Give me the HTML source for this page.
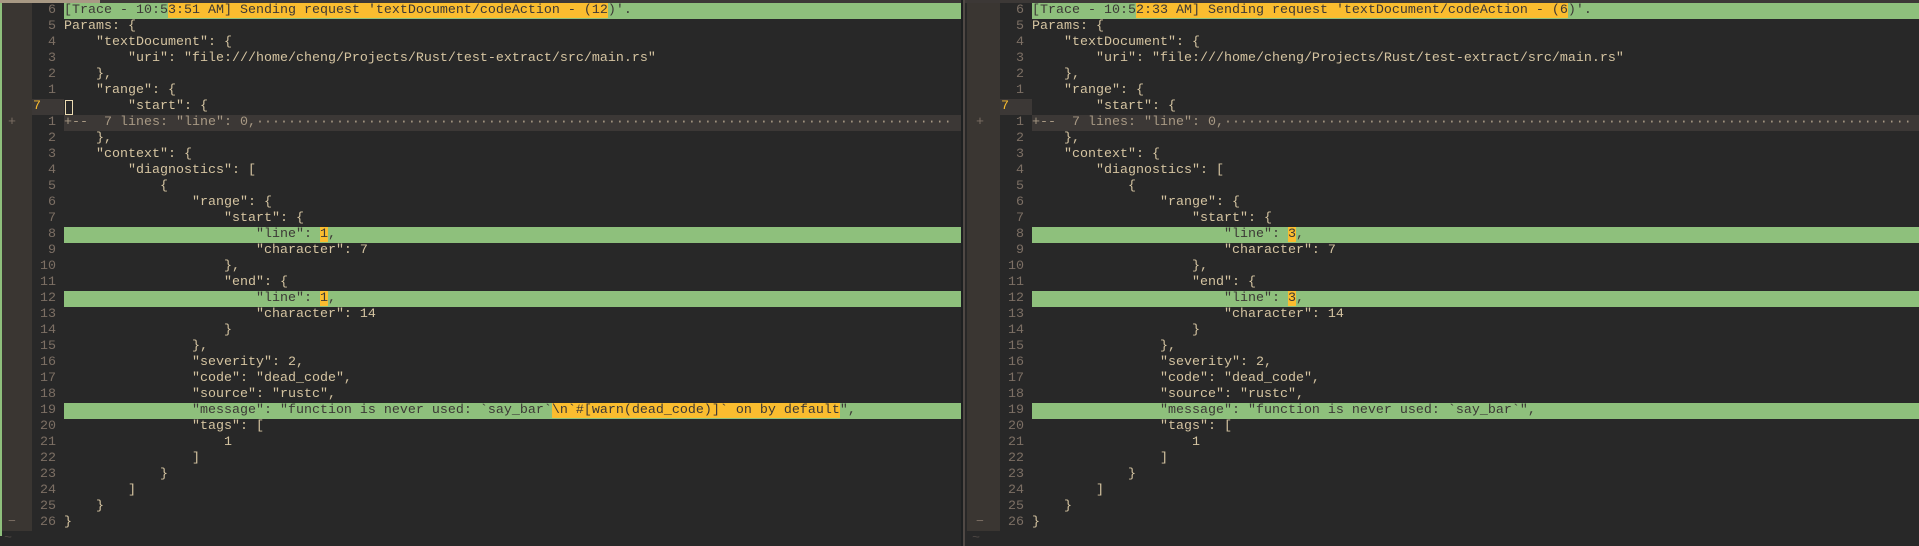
<!DOCTYPE html>
<html><head><meta charset="utf-8"><style>
html,body{margin:0;padding:0;background:#282828;width:1919px;height:546px;overflow:hidden;}
body{position:relative;font-family:"Liberation Mono",monospace;font-size:13.33px;color:#d5c4a1;}
.pane{position:absolute;top:0;height:546px;}
.sign{position:absolute;top:3px;height:528px;background:#3a3632;}
.r{position:absolute;left:0;right:0;height:16px;line-height:16px;white-space:pre;}
.n{position:absolute;left:32px;width:24px;text-align:right;color:#7c6f64;}
.t{position:absolute;left:64px;right:0;height:16px;white-space:pre;}
.g{background:#8ec07c;color:#3c3836;}
.y{background:#fabd2f;color:#3c3836;}
.fold{background:#3c3836;color:#a89984;}
.sg{position:absolute;left:8px;color:#7c6f64;}
.cur{background:#3c3836;}
.tl{position:absolute;color:#504945;}
</style></head><body>
<div style="position:absolute;left:0;top:0;width:1919px;height:3px;background:#3c3836"></div>
<div style="position:absolute;left:0;top:0;width:100px;height:3px;background:#a89984"></div>
<div style="position:absolute;left:0;top:3px;width:2px;height:533px;background:#8ec07c"></div>
<div style="position:absolute;left:963px;top:0;width:2px;height:546px;background:#504945"></div>
<div style="position:absolute;left:961px;top:0;width:2px;height:546px;background:#1d2021"></div>

<div class="pane" style="left:0;width:961px;">
<div class="sign" style="left:2px;width:30px"></div>
<div class="r" style="top:3px"><span class="n">6</span><span class="t g">[Trace - 10:5<span class="y">3:51 AM] Sending request 'textDocument/codeAction - (12</span>)'.</span></div>
<div class="r" style="top:19px"><span class="n">5</span><span class="t">Params: {</span></div>
<div class="r" style="top:35px"><span class="n">4</span><span class="t">    "textDocument": {</span></div>
<div class="r" style="top:51px"><span class="n">3</span><span class="t">        "uri": "file:///home/cheng/Projects/Rust/test-extract/src/main.rs"</span></div>
<div class="r" style="top:67px"><span class="n">2</span><span class="t">    },</span></div>
<div class="r" style="top:83px"><span class="n">1</span><span class="t">    "range": {</span></div>
<div class="r" style="top:99px"><span class="cur" style="position:absolute;left:32px;width:32px;height:16px"></span><span style="position:absolute;left:33px;color:#fabd2f">7</span><span style="position:absolute;left:65px;top:1px;width:6px;height:13px;border:1px solid #ebdbb2"></span><span class="t">        "start": {</span></div>
<div class="r" style="top:115px"><span class="sg">+</span><span class="n">1</span><span class="t fold">+--  7 lines: "line": 0,·······················································································</span></div>
<div class="r" style="top:131px"><span class="n">2</span><span class="t">    },</span></div>
<div class="r" style="top:147px"><span class="n">3</span><span class="t">    "context": {</span></div>
<div class="r" style="top:163px"><span class="n">4</span><span class="t">        "diagnostics": [</span></div>
<div class="r" style="top:179px"><span class="n">5</span><span class="t">            {</span></div>
<div class="r" style="top:195px"><span class="n">6</span><span class="t">                "range": {</span></div>
<div class="r" style="top:211px"><span class="n">7</span><span class="t">                    "start": {</span></div>
<div class="r" style="top:227px"><span class="n">8</span><span class="t g">                        "line": <span class="y">1</span>,</span></div>
<div class="r" style="top:243px"><span class="n">9</span><span class="t">                        "character": 7</span></div>
<div class="r" style="top:259px"><span class="n">10</span><span class="t">                    },</span></div>
<div class="r" style="top:275px"><span class="n">11</span><span class="t">                    "end": {</span></div>
<div class="r" style="top:291px"><span class="n">12</span><span class="t g">                        "line": <span class="y">1</span>,</span></div>
<div class="r" style="top:307px"><span class="n">13</span><span class="t">                        "character": 14</span></div>
<div class="r" style="top:323px"><span class="n">14</span><span class="t">                    }</span></div>
<div class="r" style="top:339px"><span class="n">15</span><span class="t">                },</span></div>
<div class="r" style="top:355px"><span class="n">16</span><span class="t">                "severity": 2,</span></div>
<div class="r" style="top:371px"><span class="n">17</span><span class="t">                "code": "dead_code",</span></div>
<div class="r" style="top:387px"><span class="n">18</span><span class="t">                "source": "rustc",</span></div>
<div class="r" style="top:403px"><span class="n">19</span><span class="t g">                "message": "function is never used: `say_bar`<span class="y">\n`#[warn(dead_code)]` on by default</span>",</span></div>
<div class="r" style="top:419px"><span class="n">20</span><span class="t">                "tags": [</span></div>
<div class="r" style="top:435px"><span class="n">21</span><span class="t">                    1</span></div>
<div class="r" style="top:451px"><span class="n">22</span><span class="t">                ]</span></div>
<div class="r" style="top:467px"><span class="n">23</span><span class="t">            }</span></div>
<div class="r" style="top:483px"><span class="n">24</span><span class="t">        ]</span></div>
<div class="r" style="top:499px"><span class="n">25</span><span class="t">    }</span></div>
<div class="r" style="top:515px"><span class="sg">−</span><span class="n">26</span><span class="t">}</span></div>
<div class="r" style="top:531px"><span class="tl" style="left:4px">~</span></div>
</div>

<div class="pane" style="left:968px;width:951px;">
<div class="sign" style="left:-1px;width:33px"></div>
<div class="r" style="top:3px"><span class="n">6</span><span class="t g">[Trace - 10:5<span class="y">2:33 AM] Sending request 'textDocument/codeAction - (6</span>)'.</span></div>
<div class="r" style="top:19px"><span class="n">5</span><span class="t">Params: {</span></div>
<div class="r" style="top:35px"><span class="n">4</span><span class="t">    "textDocument": {</span></div>
<div class="r" style="top:51px"><span class="n">3</span><span class="t">        "uri": "file:///home/cheng/Projects/Rust/test-extract/src/main.rs"</span></div>
<div class="r" style="top:67px"><span class="n">2</span><span class="t">    },</span></div>
<div class="r" style="top:83px"><span class="n">1</span><span class="t">    "range": {</span></div>
<div class="r" style="top:99px"><span class="cur" style="position:absolute;left:32px;width:32px;height:16px"></span><span style="position:absolute;left:33px;color:#fabd2f">7</span><span class="t">        "start": {</span></div>
<div class="r" style="top:115px"><span class="sg">+</span><span class="n">1</span><span class="t fold">+--  7 lines: "line": 0,······················································································</span></div>
<div class="r" style="top:131px"><span class="n">2</span><span class="t">    },</span></div>
<div class="r" style="top:147px"><span class="n">3</span><span class="t">    "context": {</span></div>
<div class="r" style="top:163px"><span class="n">4</span><span class="t">        "diagnostics": [</span></div>
<div class="r" style="top:179px"><span class="n">5</span><span class="t">            {</span></div>
<div class="r" style="top:195px"><span class="n">6</span><span class="t">                "range": {</span></div>
<div class="r" style="top:211px"><span class="n">7</span><span class="t">                    "start": {</span></div>
<div class="r" style="top:227px"><span class="n">8</span><span class="t g">                        "line": <span class="y">3</span>,</span></div>
<div class="r" style="top:243px"><span class="n">9</span><span class="t">                        "character": 7</span></div>
<div class="r" style="top:259px"><span class="n">10</span><span class="t">                    },</span></div>
<div class="r" style="top:275px"><span class="n">11</span><span class="t">                    "end": {</span></div>
<div class="r" style="top:291px"><span class="n">12</span><span class="t g">                        "line": <span class="y">3</span>,</span></div>
<div class="r" style="top:307px"><span class="n">13</span><span class="t">                        "character": 14</span></div>
<div class="r" style="top:323px"><span class="n">14</span><span class="t">                    }</span></div>
<div class="r" style="top:339px"><span class="n">15</span><span class="t">                },</span></div>
<div class="r" style="top:355px"><span class="n">16</span><span class="t">                "severity": 2,</span></div>
<div class="r" style="top:371px"><span class="n">17</span><span class="t">                "code": "dead_code",</span></div>
<div class="r" style="top:387px"><span class="n">18</span><span class="t">                "source": "rustc",</span></div>
<div class="r" style="top:403px"><span class="n">19</span><span class="t g">                "message": "function is never used: `say_bar`",</span></div>
<div class="r" style="top:419px"><span class="n">20</span><span class="t">                "tags": [</span></div>
<div class="r" style="top:435px"><span class="n">21</span><span class="t">                    1</span></div>
<div class="r" style="top:451px"><span class="n">22</span><span class="t">                ]</span></div>
<div class="r" style="top:467px"><span class="n">23</span><span class="t">            }</span></div>
<div class="r" style="top:483px"><span class="n">24</span><span class="t">        ]</span></div>
<div class="r" style="top:499px"><span class="n">25</span><span class="t">    }</span></div>
<div class="r" style="top:515px"><span class="sg">−</span><span class="n">26</span><span class="t">}</span></div>
<div class="r" style="top:531px"><span class="tl" style="left:4px">~</span></div>
</div>
</body></html>
